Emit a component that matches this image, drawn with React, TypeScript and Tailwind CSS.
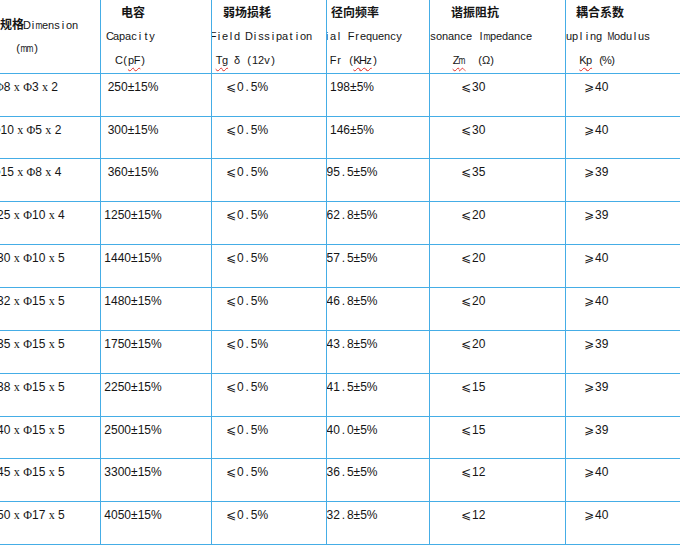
import clsx from "clsx";

const LINE = "border-[#45ade6]";

const colW = ["w-[101px]", "w-[111px]", "w-[115px]", "w-[103px]", "w-[136px]", "flex-1"];

type Row = { h: string; dim: string; cap: string; tg: string; fr: string; zm: string; kp: string };

const rows: Row[] = [
  { h: "h-[43px]", dim: "Φ8 x Φ3 x 2", cap: "250", tg: "0.5%", fr: "198", zm: "30", kp: "40" },
  { h: "h-[42px]", dim: "Φ10 x Φ5 x 2", cap: "300", tg: "0.5%", fr: "146", zm: "30", kp: "40" },
  { h: "h-[43px]", dim: "Φ15 x Φ8 x 4", cap: "360", tg: "0.5%", fr: "95.5", zm: "35", kp: "39" },
  { h: "h-[43px]", dim: "Φ25 x Φ10 x 4", cap: "1250", tg: "0.5%", fr: "62.8", zm: "20", kp: "39" },
  { h: "h-[43px]", dim: "Φ30 x Φ10 x 5", cap: "1440", tg: "0.5%", fr: "57.5", zm: "20", kp: "40" },
  { h: "h-[43px]", dim: "Φ32 x Φ15 x 5", cap: "1480", tg: "0.5%", fr: "46.8", zm: "20", kp: "40" },
  { h: "h-[43px]", dim: "Φ35 x Φ15 x 5", cap: "1750", tg: "0.5%", fr: "43.8", zm: "20", kp: "39" },
  { h: "h-[43px]", dim: "Φ38 x Φ15 x 5", cap: "2250", tg: "0.5%", fr: "41.5", zm: "15", kp: "39" },
  { h: "h-[42px]", dim: "Φ40 x Φ15 x 5", cap: "2500", tg: "0.5%", fr: "40.0", zm: "15", kp: "39" },
  { h: "h-[43px]", dim: "Φ45 x Φ15 x 5", cap: "3300", tg: "0.5%", fr: "36.5", zm: "12", kp: "40" },
  { h: "h-[43px]", dim: "Φ50 x Φ17 x 5", cap: "4050", tg: "0.5%", fr: "32.8", zm: "12", kp: "40" },
];

// half-width latin laid out in 6px cells, like the bitmap font of the source document
const Mono = ({ t, u = "" }: { t: string; u?: string }) => {
  const at = u ? t.indexOf(u) : -1;
  return (
    <span className="inline-flex text-[11px]">
      {Array.from(t).map((c, i) => {
        const under = at >= 0 && i >= at && i < at + u.length;
        return (
          <span
            key={i}
            className={clsx(
              "inline-flex w-[6px] justify-center",
              under && "underline decoration-wavy decoration-[#e0302a] decoration-1 underline-offset-[3px]",
              "mMwW".includes(c) && "scale-x-75"
            )}
          >
            {c === " " ? "\u00a0" : c}
          </span>
        );
      })}
    </span>
  );
};

// numbers with the wide decimal point
const Num = ({ t }: { t: string }) => (
  <span>
    {t.split(".").map((part, i) => (
      <span key={i}>
        {i > 0 && <span className="inline-flex w-[7px] justify-center">.</span>}
        {part}
      </span>
    ))}
  </span>
);

const Dim = ({ t }: { t: string }) => (
  <span>
    {Array.from(t).map((c, i) =>
      c === "Φ" || c === "x" ? (
        <span key={i} className="font-['Liberation_Serif',serif]">
          {c}
        </span>
      ) : (
        <span key={i}>{c === " " ? "\u00a0" : c}</span>
      )
    )}
  </span>
);

const Le = () => <span className="font-['DejaVu_Sans',sans-serif] text-[12px]">⩽</span>;
const Ge = () => <span className="font-['DejaVu_Sans',sans-serif] text-[12px]">⩾</span>;

const Cn = ({ children, pad }: { children: string; pad: string }) => (
  <div className={clsx("h-6 leading-6 whitespace-nowrap font-['Noto_Sans_CJK_SC',sans-serif] font-bold text-[12px]", pad)}>
    {children}
  </div>
);

const Ln = ({ children, pad }: { children: React.ReactNode; pad: string }) => (
  <div className={clsx("h-6 leading-6 whitespace-nowrap", pad)}>{children}</div>
);

export default function App() {
  return (
    <div className="w-[680px] h-[545px] overflow-hidden bg-white text-[#151515] font-['Liberation_Sans','Noto_Sans_CJK_SC',sans-serif] text-[12px]">
      {/* header */}
      <div className={clsx("flex h-[74px] border-b", LINE)}>
        <div className={clsx(colW[0], "shrink-0 overflow-hidden border-r pt-[12px]", LINE)}>
          <div className="h-6 leading-6 whitespace-nowrap">
            <span className="font-['Noto_Sans_CJK_SC',sans-serif] font-bold">规格</span>
            <Mono t="Dimension" />
          </div>
          <Ln pad="pl-[15px]">
            <Mono t="(mm)" />
          </Ln>
        </div>
        <div className={clsx(colW[1], "shrink-0 overflow-hidden border-r", LINE)}>
          <Cn pad="pl-[20px]">电容</Cn>
          <Ln pad="pl-[6px]">
            <Mono t="Capacity" />
          </Ln>
          <Ln pad="pl-[15px]">
            <Mono t="C(pF)" u="pF" />
          </Ln>
        </div>
        <div className={clsx(colW[2], "shrink-0 overflow-hidden border-r", LINE)}>
          <Cn pad="pl-[11px]">弱场损耗</Cn>
          <Ln pad="-ml-[2px]">
            <Mono t="Field Dissipation" />
          </Ln>
          <Ln pad="pl-[4px]">
            <Mono t="Tg δ (12v)" u="Tg" />
          </Ln>
        </div>
        <div className={clsx(colW[3], "shrink-0 overflow-hidden border-r", LINE)}>
          <Cn pad="pl-[4px]">径向频率</Cn>
          <Ln pad="-ml-[21px]">
            <Mono t="Radial Frequency" />
          </Ln>
          <Ln pad="pl-[3px]">
            <Mono t="Fr (KHz)" u="KHz" />
          </Ln>
        </div>
        <div className={clsx(colW[4], "shrink-0 overflow-hidden border-r", LINE)}>
          <Cn pad="pl-[21px]">谐振阻抗</Cn>
          <Ln pad="-ml-[12px]">
            <Mono t="Resonance Impedance" />
          </Ln>
          <Ln pad="pl-[23px]">
            <Mono t="Zm  (Ω)" u="Zm" />
          </Ln>
        </div>
        <div className={clsx(colW[5], "overflow-hidden")}>
          <Cn pad="pl-[10px]">耦合系数</Cn>
          <Ln pad="-ml-[12px]">
            <Mono t="Coupling Modulus" />
          </Ln>
          <Ln pad="pl-[14px]">
            <Mono t="Kp (%)" u="Kp" />
          </Ln>
        </div>
      </div>

      {/* data rows */}
      {rows.map((r) => (
        <div key={r.dim} className={clsx("flex border-b leading-4", r.h, LINE)}>
          <div className={clsx(colW[0], "shrink-0 overflow-hidden border-r pt-[5px]", LINE)}>
            <div className="w-[53px] flex justify-center whitespace-nowrap">
              <Dim t={r.dim} />
            </div>
          </div>
          <div className={clsx(colW[1], "shrink-0 overflow-hidden border-r pt-[5px]", LINE)}>
            <div className="w-[64px] flex justify-center whitespace-nowrap">{r.cap}±15%</div>
          </div>
          <div className={clsx(colW[2], "shrink-0 overflow-hidden border-r pt-[5px] pl-[14px] whitespace-nowrap", LINE)}>
            <Le />
            <span className="ml-[1px]">
              <Num t={r.tg} />
            </span>
          </div>
          <div className={clsx(colW[3], "shrink-0 overflow-hidden border-r pt-[5px]", LINE)}>
            <div className="w-[50px] flex justify-center whitespace-nowrap">
              <span>
                <Num t={r.fr} />
                ±5%
              </span>
            </div>
          </div>
          <div className={clsx(colW[4], "shrink-0 overflow-hidden border-r pt-[5px] pl-[31px] whitespace-nowrap", LINE)}>
            <Le />
            <span className="ml-[1px]">{r.zm}</span>
          </div>
          <div className={clsx(colW[5], "overflow-hidden pt-[5px] pl-[18px] whitespace-nowrap")}>
            <Ge />
            <span className="ml-[1px]">{r.kp}</span>
          </div>
        </div>
      ))}
    </div>
  );
}
